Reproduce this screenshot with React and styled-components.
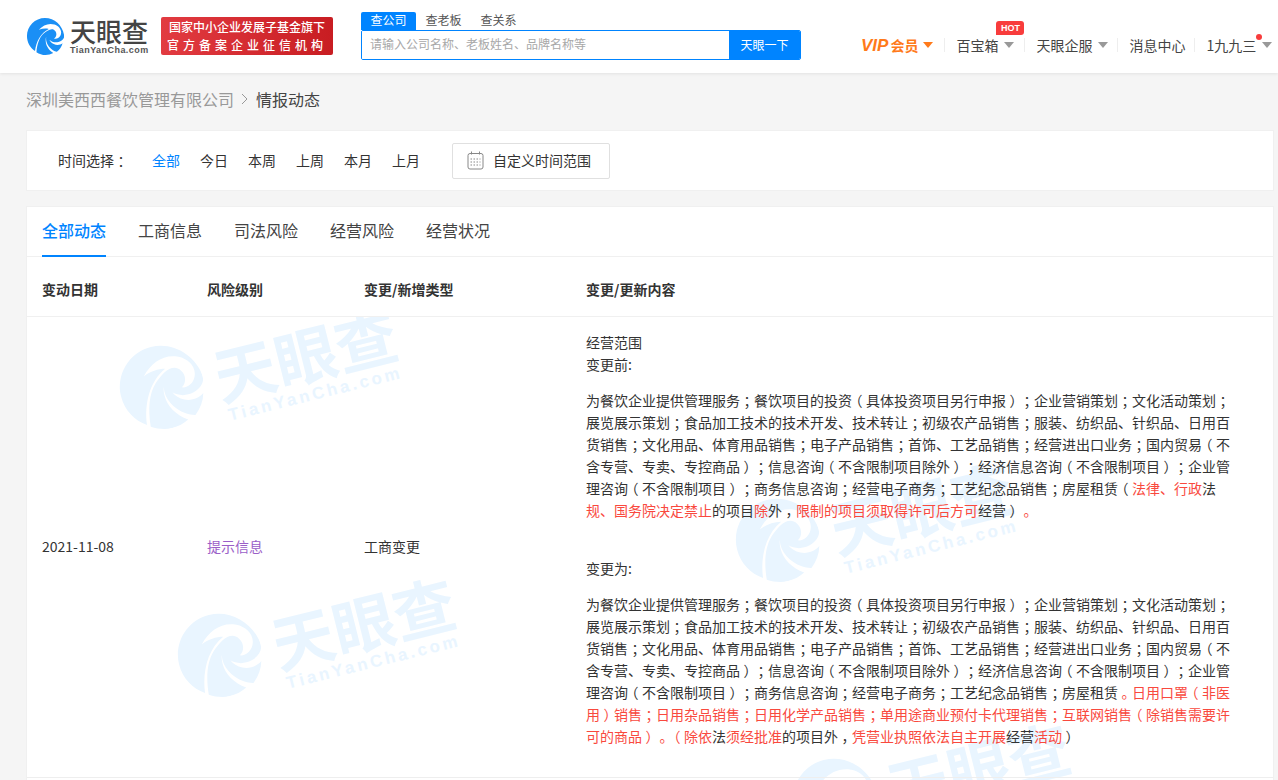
import React from 'react';
import styled, { createGlobalStyle } from 'styled-components';

const Global = createGlobalStyle`
  html, body { margin: 0; padding: 0; height: 780px; overflow: hidden; background: #f5f5f5; }
  body, input { font-family: "Noto Sans CJK SC", "Liberation Sans", sans-serif; text-spacing-trim: space-all; }
  * { box-sizing: border-box; }
`;

const Header = styled.header`
  height: 73px; background: #fff; box-shadow: 0 1px 3px rgba(0,0,0,.08);
  display: flex; align-items: flex-start; position: relative; z-index: 2;
`;
const LogoWrap = styled.div`
  display: flex; align-items: center; margin: 17px 0 0 26px; width: 127px; gap: 6px; flex: none;
`;
const LogoWords = styled.div`display: flex; flex-direction: column;`;
const LogoCn = styled.div`
  font-size: 26px; line-height: 28px; font-weight: 500; color: #444; letter-spacing: 0;
`;
const LogoEn = styled.div`
  font: 700 9px/10px "Liberation Sans", sans-serif; color: #555; letter-spacing: .45px; white-space: nowrap;
`;
const Slogan = styled.div`
  margin: 17px 0 0 8px; width: 172px; height: 38px; border-radius: 2px; flex: none;
  background: linear-gradient(90deg, #e23b41, #c81d22); color: #fff;
  font-size: 12px; line-height: 18px; padding: 1px 0; text-align: center; font-weight: 500;
`;
const SloganLine = styled.div`
  white-space: nowrap; letter-spacing: ${p => p.$sp || 0}px;
`;
const Search = styled.div`margin: 12px 0 0 28px; width: 440px; flex: none;`;
const SearchTabs = styled.div`display: flex; height: 18px;`;
const SearchTab = styled.div`
  width: ${p => p.$w}px; height: 18px; text-align: center; font-size: 12px; line-height: 16px;
  color: ${p => p.$on ? '#fff' : '#555'};
  background: ${p => p.$on ? '#0084ff' : 'transparent'};
  border-radius: 2px 2px 0 0;
`;
const SearchBox = styled.div`
  display: flex; height: 30px; border: 1px solid #0084ff; border-radius: 2px; overflow: hidden;
`;
const SearchInput = styled.div`
  flex: 1; font-size: 12px; line-height: 26px; color: #a8a8a8; padding-left: 8px; background: #fff;
`;
const SearchBtn = styled.div`
  width: 71px; background: #0084ff; color: #fff; font-size: 12px; line-height: 27px; text-align: center;
`;
const Nav = styled.nav`
  margin: 34px 0 0 60px; display: flex; align-items: center; height: 22px; flex: 1; min-width: 0;
`;
const NavItem = styled.div`
  position: relative; display: flex; align-items: center; font-size: 14px; color: #444; white-space: nowrap;
  height: 14px; padding: 0 ${p => p.$pr ?? 11}px 0 ${p => p.$pl ?? 11}px;
  border-left: ${p => p.$first ? 'none' : '1px solid #eee'};
`;
const Vip = styled.span`
  color: #ff7a1a; font-weight: 700; font-size: 14px; display: flex; align-items: center; gap: 2px;
`;
const VipMark = styled.span`
  font: italic 700 17px/1 "Liberation Sans", sans-serif;
`;
const Caret = styled.i`
  width: 0; height: 0; margin-left: ${p => p.$ml ?? 6}px; display: inline-block;
  border-left: 5px solid transparent; border-right: 5px solid transparent;
  border-top: 6px solid ${p => p.$c || '#999'};
`;
const Hot = styled.span`
  position: absolute; left: 51px; top: -17px; width: 28px; height: 14px; background: #f83c3c; color: #fff;
  font: 700 9px/14px "Liberation Sans", sans-serif; text-align: center; border-radius: 3px 3px 3px 0;
`;
const Dot = styled.span`
  position: absolute; left: 61px; top: -4px; width: 6px; height: 6px; background: #f83c3c; border-radius: 50%;
`;

const Main = styled.main`padding: 0 4px 0 26px;`;
const Crumbs = styled.div`
  height: 57px; padding-bottom: 6px; display: flex; align-items: center; font-size: 16px; color: #999; gap: 6px;
`;
const CrumbNow = styled.span`color: #444; margin-left: 1px;`;
const Filter = styled.section`
  height: 61px; background: #fff; border: 1px solid #f0f0f0; display: flex; align-items: center; padding-left: 31px;
  font-size: 14px; color: #333;
`;
const FilterLabel = styled.span`width: 94px; white-space: nowrap; padding-bottom: 2px;`;
const FilterOpt = styled.span`
  width: 48px; white-space: nowrap; padding-bottom: 2px; color: ${p => p.$on ? '#0084ff' : '#333'};
`;
const DateBtn = styled.div`
  margin-left: 12px; width: 158px; height: 36px; border: 1px solid #e0e0e0; border-radius: 2px;
  display: flex; align-items: center; padding-left: 14px; gap: 9px;
`;
const DateText = styled.span`padding-bottom: 2px; white-space: nowrap;`;
const Card = styled.section`
  margin-top: 15px; background: #fff; border: 1px solid #f0f0f0; height: 700px; position: relative; overflow: hidden;
`;
const Tabs = styled.div`
  height: 50px; display: flex; gap: 32px; padding-left: 15px; border-bottom: 1px solid #f0f0f0;
`;
const Tab = styled.div`
  height: 50px; font-size: 16px; line-height: 46px;
  color: ${p => p.$on ? '#0084ff' : '#444'};
  border-bottom: 2px solid ${p => p.$on ? '#0084ff' : 'transparent'};
  font-weight: ${p => p.$on ? 500 : 400};
`;
const Grid = `display: grid; grid-template-columns: 165px 157px 222px 646px; padding-left: 15px;`;
const Head = styled.div`
  ${Grid} height: 60px; padding-top: 5px; align-items: center; font-size: 14px; font-weight: 700; color: #333;
  border-bottom: 1px solid #f0f0f0;
`;
const Row = styled.div`
  ${Grid} align-items: center; font-size: 14px; color: #333; height: 461px; border-bottom: 1px solid #eee;
  position: relative; overflow: visible;
`;
const Cell = styled.div`position: relative; z-index: 1; padding-bottom: 2px; color: ${p => p.$c || '#333'};`;
const Content = styled.div`
  position: relative; z-index: 1; font-size: 14px; line-height: 22px; color: #333; padding-top: 14px; height: 460px;
`;
const Para = styled.p`margin: 0 0 ${p => p.$mb ?? 0}px; white-space: nowrap;`;
const Red = styled.span`color: #f9493e;`;
const Punct = styled.span`
  display: inline-block; width: 1em; text-align: center; font-feature-settings: "halt";
`;
const Mark = styled.div`
  position: absolute; left: ${p => p.$x}px; top: ${p => p.$y}px; width: 320px; height: 110px;
  transform: rotate(-14deg); transform-origin: 0 50%; display: flex; align-items: center; gap: 12px; z-index: 0;
  color: #e9f5ff; pointer-events: none;
`;
const MarkWords = styled.div`display: flex; flex-direction: column; margin-top: 26px;`;
const MarkCn = styled.div`font-size: 62px; line-height: 64px; font-weight: 700; white-space: nowrap;`;
const MarkEn = styled.div`font: 700 17px/22px "Liberation Sans", sans-serif; letter-spacing: 3px; white-space: nowrap; margin-left: 4px;`;
const Clip = styled.div`position: absolute; left: 0; right: 0; top: 110px; bottom: 0; overflow: hidden; z-index: 0;`;

const T = ({ children }) => String(children).split(/([；，。（）：])/).map((s, i) =>
  i % 2 ? <Punct key={i}>{s}</Punct> : s
);

const LogoIcon = ({ size, color = '#1a8ff5' }) => (
  <svg width={size} height={size} viewBox="0 0 40 40" fill="none" style={{ flex: 'none' }}>
    <path fill={color} d="M20 1C9.5 1 1 9.6 1 20c0 6.6 3.4 12.4 8.5 15.8C10.6 26 15.5 16.5 24 12.5c-3.2-.8-7-.5-10.5 1C18 8.5 24 6 30 8c3.8 1.3 7 4.6 7 8.4 0 2.5-1.2 4.7-3.2 5.8-1.5.9-3.1 1-4.3.5 2.5-1.5 3.3-5 1.5-7.6C28 10.5 22.3 14 18 18c-4 4-6.3 10.5-7 19 3 1.8 6 3 9.5 3 3 0 5.7-.7 8.2-2-5-3.4-8-8.3-8-13.5 0-1.5.2-2.8.6-4-1 5.6 2 11 7 14.4 1.4.9 2.8 1.5 4.2 1.8 3-2.4 5-5.4 6-9-2.4 1.8-6 2.3-9.3.8-2.2-1-3.8-2.7-4.6-4.6 2.2 2.2 6 3.4 9.6 2.4 3-.8 5-2.6 5.8-4.8.1-.5.2-1 .2-1.5C39 9.5 30.5 1 20 1z" />
  </svg>
);
const CalIcon = () => (
  <svg width="17" height="19" viewBox="0 0 17 19" fill="none" stroke="#888" strokeWidth="1" style={{ flex: 'none' }}>
    <rect x="1" y="2.5" width="15" height="15.5" rx="2" />
    <path d="M4.5 .5v3M12.5 .5v3" />
    <path d="M3.5 8h10M3.5 11h10M3.5 14h10" strokeDasharray="1.5 1.5" />
  </svg>
);
const Watermark = ({ x, y }) => (
  <Mark $x={x} $y={y}>
    <LogoIcon size={86} color="#e9f5ff" />
    <MarkWords>
      <MarkCn>天眼查</MarkCn>
      <MarkEn>TianYanCha.com</MarkEn>
    </MarkWords>
  </Mark>
);

const range1 = ['为餐饮企业提供管理服务；餐饮项目的投资（具体投资项目另行申报）；企业营销策划；文化活动策划；','展览展示策划；食品加工技术的技术开发、技术转让；初级农产品销售；服装、纺织品、针织品、日用百','货销售；文化用品、体育用品销售；电子产品销售；首饰、工艺品销售；经营进出口业务；国内贸易（不','含专营、专卖、专控商品）；信息咨询（不含限制项目除外）；经济信息咨询（不含限制项目）；企业管'];

export default function App() {
  return (
    <>
      <Global />
      <Header>
        <LogoWrap>
          <LogoIcon size={38} />
          <LogoWords>
            <LogoCn>天眼查</LogoCn>
            <LogoEn>TianYanCha.com</LogoEn>
          </LogoWords>
        </LogoWrap>
        <Slogan>
          <SloganLine>国家中小企业发展子基金旗下</SloganLine>
          <SloganLine $sp={4}>官方备案企业征信机构</SloganLine>
        </Slogan>
        <Search>
          <SearchTabs>
            <SearchTab $w={55} $on>查公司</SearchTab>
            <SearchTab $w={55}>查老板</SearchTab>
            <SearchTab $w={55}>查关系</SearchTab>
          </SearchTabs>
          <SearchBox>
            <SearchInput>请输入公司名称、老板姓名、品牌名称等</SearchInput>
            <SearchBtn>天眼一下</SearchBtn>
          </SearchBox>
        </Search>
        <Nav>
          <NavItem $first $pl={0} $pr={11}><Vip><VipMark>VIP</VipMark>会员</Vip><Caret $c="#ff7a1a" $ml={5} /></NavItem>
          <NavItem $pr={10}>百宝箱<Caret /><Hot>HOT</Hot></NavItem>
          <NavItem $pr={9}>天眼企服<Caret /></NavItem>
          <NavItem $pr={9}>消息中心</NavItem>
          <NavItem $pr={0}>1九九三<Caret /><Dot /></NavItem>
        </Nav>
      </Header>
      <Main>
        <Crumbs>深圳美西西餐饮管理有限公司 <svg width="9" height="12" viewBox="0 0 9 12" fill="none" stroke="#999"><path d="M2 1l5 5-5 5" /></svg> <CrumbNow>情报动态</CrumbNow></Crumbs>
        <Filter>
          <FilterLabel><T>时间选择：</T></FilterLabel>
          <FilterOpt $on>全部</FilterOpt>
          <FilterOpt>今日</FilterOpt>
          <FilterOpt>本周</FilterOpt>
          <FilterOpt>上周</FilterOpt>
          <FilterOpt>本月</FilterOpt>
          <FilterOpt>上月</FilterOpt>
          <DateBtn><CalIcon /><DateText>自定义时间范围</DateText></DateBtn>
        </Filter>
        <Card>
          <Clip>
            <Watermark x={92} y={25} />
            <Watermark x={708} y={178} />
            <Watermark x={150} y={293} />
            <Watermark x={765} y={438} />
          </Clip>
          <Tabs>
            <Tab $on>全部动态</Tab>
            <Tab>工商信息</Tab>
            <Tab>司法风险</Tab>
            <Tab>经营风险</Tab>
            <Tab>经营状况</Tab>
          </Tabs>
          <Head>
            <div>变动日期</div><div>风险级别</div><div>变更/新增类型</div><div>变更/更新内容</div>
          </Head>
          <Row>
            <Cell>2021-11-08</Cell>
            <Cell $c="#9b5fc8">提示信息</Cell>
            <Cell>工商变更</Cell>
            <Content>
              <Para>经营范围</Para>
              <Para $mb={14}>变更前:</Para>
              {range1.map(l => <Para key={l}><T>{l}</T></Para>)}
              <Para><T>理咨询（不含限制项目）；商务信息咨询；经营电子商务；工艺纪念品销售；房屋租赁（</T><Red>法律、行政</Red>法</Para>
              <Para $mb={36}><Red>规、国务院决定禁止</Red>的项目<Red>除</Red>外<T>，</T><Red>限制的项目须取得许可后方可</Red>经营<T>）</T><Red><T>。</T></Red></Para>
              <Para $mb={14}>变更为:</Para>
              {range1.map(l => <Para key={l + '2'}><T>{l}</T></Para>)}
              <Para><T>理咨询（不含限制项目）；商务信息咨询；经营电子商务；工艺纪念品销售；房屋租赁</T><Red><T>。日用口罩（非医</T></Red></Para>
              <Para><Red><T>用）销售；日用杂品销售；日用化学产品销售；单用途商业预付卡代理销售；互联网销售（除销售需要许</T></Red></Para>
              <Para><Red><T>可的商品）。（除依</T></Red>法<Red>须经批准</Red>的项目外<T>，</T><Red>凭营业执照依法自主开展</Red>经营<Red>活动</Red><T>）</T></Para>
            </Content>
          </Row>
        </Card>
      </Main>
    </>
  );
}
